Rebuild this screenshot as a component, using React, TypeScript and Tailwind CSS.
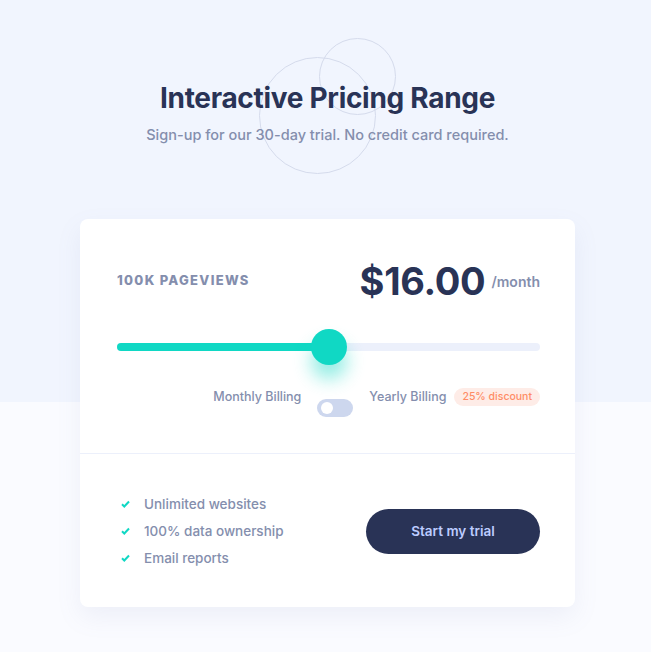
import React, { useState } from 'react';

const FEATURES = ["Unlimited websites", "100% data ownership", "Email reports"];

function Check() {
  return (
    <svg width="9" height="8" viewBox="0 0 9 8" className="shrink-0">
      <path d="M1 4.2l2.3 2.3L8 1.5" fill="none" stroke="#10d8c4" strokeWidth="2" />
    </svg>
  );
}

export default function App() {
  const [value, setValue] = useState(50);
  const [yearly, setYearly] = useState(false);

  return (
    <div
      className="min-h-screen pl-[4px] bg-[linear-gradient(to_bottom,#f1f5fe_0,#f1f5fe_402px,#fafbff_402px)] text-[#848ead]"
      style={{ fontFamily: 'Inter, "Noto Sans", sans-serif' }}
    >
      <header className="relative pt-[80px] text-center">
        <svg
          className="pointer-events-none absolute left-1/2 top-[38px] -translate-x-[69px]"
          width="140"
          height="140"
          viewBox="0 0 140 140"
          fill="none"
          stroke="#d5dbec"
          strokeWidth="1"
        >
          <circle cx="58.5" cy="77.5" r="58" />
          <circle cx="98.5" cy="38.5" r="38" />
        </svg>
        <h1 className="relative text-[28px] leading-[36px] font-bold text-[#293356] tracking-[-0.3px]">
          Interactive Pricing Range
        </h1>
        <p className="relative mt-[8px] text-[14.5px] leading-[22px] font-medium">
          Sign-up for our 30-day trial. No credit card required.
        </p>
      </header>

      <div className="mx-auto mt-[73px] w-[495px] rounded-lg bg-white shadow-[0_10px_25px_rgba(127,137,185,0.1)]">
        <div className="pl-[37px] pr-[35px] pt-[38px] pb-[36px]">
          <div className="flex items-center justify-between">
            <span className="text-[13px] font-extrabold tracking-[1.3px]">100K PAGEVIEWS</span>
            <div className="flex items-center gap-[6px]">
              <span className="text-[38px] leading-[48px] font-bold text-[#293356] tracking-[-0.3px]">$16.00</span>
              <span className="text-[14px] font-semibold">/month</span>
            </div>
          </div>

          <div className="relative mt-[24px] h-[36px] flex items-center">
            <div className="h-[8px] w-full rounded-full bg-[#ecf0fb]">
              <div className="h-full rounded-full bg-[#10d8c4]" style={{ width: `${value}%` }} />
            </div>
            <div
              className="absolute top-0 h-[36px] w-[36px] -translate-x-1/2 rounded-full bg-[#10d8c4] shadow-[0_14px_18px_rgba(16,216,196,0.45)]"
              style={{ left: `${value}%` }}
            />
            <input
              type="range"
              min={0}
              max={100}
              value={value}
              onChange={e => setValue(Number(e.target.value))}
              className="absolute inset-0 w-full opacity-0 cursor-pointer"
            />
          </div>

          <div className="mt-[22px] flex items-start justify-end text-[12.5px] leading-[20px] font-medium">
            <span className="mr-[16px]">Monthly Billing</span>
            <button
              onClick={() => setYearly(!yearly)}
              className={`mt-[12px] flex h-[18px] w-[36px] items-center rounded-full px-[4px] ${yearly ? 'bg-[#10d8c4] justify-end' : 'bg-[#cdd7ee] justify-start'}`}
            >
              <span className="h-[12px] w-[12px] rounded-full bg-white" />
            </button>
            <span className="ml-[16px]">Yearly Billing</span>
            <span className="ml-[8px] mt-[1px] rounded-full bg-[#feece7] px-[8px] text-[10.5px] leading-[18px] text-[#ff8c66]">
              25% discount
            </span>
          </div>
        </div>

        <div className="h-px bg-[#ecf0fb]" />

        <div className="flex items-center justify-between pl-[37px] pr-[35px] pt-[40px] pb-[39px]">
          <ul className="flex flex-col gap-[7px] text-[13.5px] leading-[20px] font-medium">
            {FEATURES.map(f => (
              <li key={f} className="flex items-center gap-[14px] pl-[4px]">
                <Check />
                <span>{f}</span>
              </li>
            ))}
          </ul>
          <button className="h-[45px] w-[174px] rounded-full bg-[#293356] text-[13.5px] font-semibold text-[#bdccff]">
            Start my trial
          </button>
        </div>
      </div>
    </div>
  );
}
